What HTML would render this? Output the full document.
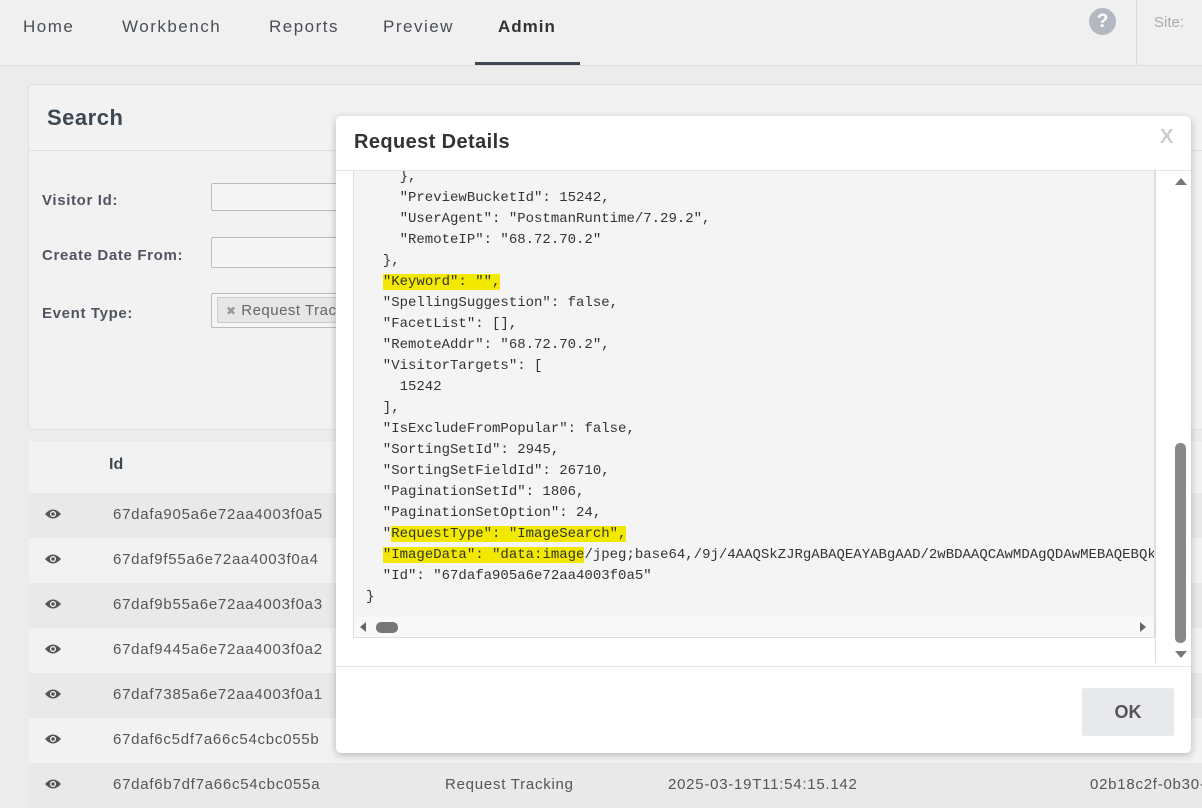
<!DOCTYPE html>
<html><head><meta charset="utf-8"><style>
*{box-sizing:border-box;margin:0;padding:0}
body{width:1202px;height:797px;overflow:hidden;background:#ececec;font-family:"Liberation Sans",sans-serif;color:#444;position:relative}
.nav{position:absolute;left:0;top:0;width:1202px;height:66px;background:#f0f0f0;border-bottom:1px solid #dcdcdc}
.nav span{position:absolute;top:17px;font-size:17px;color:#4a4f55;letter-spacing:1.5px}
.ul{position:absolute;left:475px;top:62px;width:105px;height:3px;background:#3d4852}
.help{position:absolute;left:1089px;top:8px;width:27px;height:27px;border-radius:50%;background:#b4b9c1;color:#fff;font-weight:bold;font-size:19px;text-align:center;line-height:27px}
.vl{position:absolute;left:1136px;top:0;width:1px;height:66px;background:#dcdcdc}
.site{position:absolute;left:1154px;top:14px;font-size:15px;color:#aaa}
.panel{position:absolute;left:28px;top:84px;width:1190px;height:346px;background:#f2f2f2;border:1px solid #e0e0e0;border-radius:4px}
.panel h2{position:absolute;left:18px;top:20px;font-size:22px;font-weight:bold;color:#3d4852;letter-spacing:0.5px}
.panel .hl{position:absolute;left:0;top:65px;width:100%;height:1px;background:#e0e0e0}
.lbl{position:absolute;left:42px;font-size:15px;font-weight:bold;color:#505560;letter-spacing:0.65px}
.inp{position:absolute;left:211px;width:200px;height:28px;border:1px solid #bbb;background:#f5f5f5;border-radius:2px}
.tbl{position:absolute;left:29px;top:441px;width:1180px}
.row{position:absolute;left:0;width:1180px;height:45px}
.row .eye{position:absolute;left:16px;top:15px}
.row .id{position:absolute;left:84px;top:13px;font-size:15px;color:#555;letter-spacing:0.75px}
.modal{position:absolute;left:336px;top:116px;width:855px;height:637px;background:#fff;border-radius:5px;box-shadow:0 2px 8px rgba(0,0,0,.25)}
.modal h3{position:absolute;left:18px;top:15px;font-size:20px;font-weight:bold;color:#333;letter-spacing:0.4px}
.x{position:absolute;left:824px;top:10px;font-size:20px;color:#ccc;font-weight:bold}
.mh{position:absolute;left:0;top:54px;width:855px;height:1px;background:#e5e5e5}
.code{position:absolute;left:17px;top:55px;width:802px;height:467px;background:#f4f4f4;border:1px solid #ddd;border-top:none;overflow:hidden}
pre{position:absolute;left:12px;top:-4px;font-family:"Liberation Mono",monospace;font-size:14px;line-height:21px;color:#333;white-space:pre}
.hy{background:#f3e900}
.hs{position:absolute;left:0;bottom:0;width:100%;height:20px;background:#f8f8f8}
.vs{position:absolute;left:819px;top:55px;width:35px;height:492px;background:#fff;border-left:1px solid #ddd}
.ft{position:absolute;left:0;top:550px;width:855px;height:1px;background:#e5e5e5}
.ok{position:absolute;left:746px;top:572px;width:92px;height:48px;background:#e7e9ec;border-radius:3px;font-size:18px;font-weight:bold;color:#555;text-align:center;line-height:48px}
</style></head><body>
<div class="nav">
<span style="left:23px">Home</span><span style="left:122px">Workbench</span><span style="left:269px">Reports</span><span style="left:383px">Preview</span><span style="left:498px;font-weight:bold;color:#333;letter-spacing:1px">Admin</span>
<div class="ul"></div><div class="help">?</div><div class="vl"></div><div class="site">Site:</div>
</div>
<div class="panel"><h2>Search</h2><div class="hl"></div></div>
<div class="lbl" style="top:192px">Visitor Id:</div><div class="inp" style="top:183px"></div>
<div class="lbl" style="top:247px">Create Date From:</div><div class="inp" style="top:237px;height:31px"></div>
<div class="lbl" style="top:305px">Event Type:</div><div class="inp" style="top:293px;height:35px"><div style="position:absolute;left:5px;top:3px;width:190px;height:26px;background:#e6e6e6;border:1px solid #ccc;border-radius:2px;font-size:15px;color:#666;padding:4px 8px;white-space:nowrap;overflow:hidden;letter-spacing:0.5px"><span style="color:#999;font-size:12px">✖</span> Request Tracking</div></div>
<div class="tbl">
<div class="row" style="top:0;height:52px;background:#f2f2f2"><span style="position:absolute;left:80px;top:15px;font-size:16px;font-weight:bold;color:#3d4852">Id</span></div>
<div class="row" style="top:52px;background:#e9e9e9"><svg class="eye" width="16" height="12" viewBox="0 0 16 12"><path d="M0 6Q8-3 16 6Q8 15 0 6Z" fill="#555"/><circle cx="8" cy="6" r="3" fill="#fff"/><circle cx="8" cy="6" r="1.8" fill="#555"/></svg><span class="id">67dafa905a6e72aa4003f0a5</span></div>
<div class="row" style="top:97px;background:#f2f2f2"><svg class="eye" width="16" height="12" viewBox="0 0 16 12"><path d="M0 6Q8-3 16 6Q8 15 0 6Z" fill="#555"/><circle cx="8" cy="6" r="3" fill="#fff"/><circle cx="8" cy="6" r="1.8" fill="#555"/></svg><span class="id">67daf9f55a6e72aa4003f0a4</span></div>
<div class="row" style="top:142px;background:#e9e9e9"><svg class="eye" width="16" height="12" viewBox="0 0 16 12"><path d="M0 6Q8-3 16 6Q8 15 0 6Z" fill="#555"/><circle cx="8" cy="6" r="3" fill="#fff"/><circle cx="8" cy="6" r="1.8" fill="#555"/></svg><span class="id">67daf9b55a6e72aa4003f0a3</span></div>
<div class="row" style="top:187px;background:#f2f2f2"><svg class="eye" width="16" height="12" viewBox="0 0 16 12"><path d="M0 6Q8-3 16 6Q8 15 0 6Z" fill="#555"/><circle cx="8" cy="6" r="3" fill="#fff"/><circle cx="8" cy="6" r="1.8" fill="#555"/></svg><span class="id">67daf9445a6e72aa4003f0a2</span></div>
<div class="row" style="top:232px;background:#e9e9e9"><svg class="eye" width="16" height="12" viewBox="0 0 16 12"><path d="M0 6Q8-3 16 6Q8 15 0 6Z" fill="#555"/><circle cx="8" cy="6" r="3" fill="#fff"/><circle cx="8" cy="6" r="1.8" fill="#555"/></svg><span class="id">67daf7385a6e72aa4003f0a1</span></div>
<div class="row" style="top:277px;background:#f2f2f2"><svg class="eye" width="16" height="12" viewBox="0 0 16 12"><path d="M0 6Q8-3 16 6Q8 15 0 6Z" fill="#555"/><circle cx="8" cy="6" r="3" fill="#fff"/><circle cx="8" cy="6" r="1.8" fill="#555"/></svg><span class="id">67daf6c5df7a66c54cbc055b</span></div>
<div class="row" style="top:322px;background:#e9e9e9"><svg class="eye" width="16" height="12" viewBox="0 0 16 12"><path d="M0 6Q8-3 16 6Q8 15 0 6Z" fill="#555"/><circle cx="8" cy="6" r="3" fill="#fff"/><circle cx="8" cy="6" r="1.8" fill="#555"/></svg><span class="id">67daf6b7df7a66c54cbc055a</span><span class="id" style="left:416px">Request Tracking</span><span class="id" style="left:639px">2025-03-19T11:54:15.142</span><span class="id" style="left:1061px">02b18c2f-0b30-</span></div>
</div>
<div class="modal">
<h3>Request Details</h3><div class="x">X</div><div class="mh"></div>
<div class="code"><pre>    },
    "PreviewBucketId": 15242,
    "UserAgent": "PostmanRuntime/7.29.2",
    "RemoteIP": "68.72.70.2"
  },
  <span class="hy">"Keyword": "",</span>
  "SpellingSuggestion": false,
  "FacetList": [],
  "RemoteAddr": "68.72.70.2",
  "VisitorTargets": [
    15242
  ],
  "IsExcludeFromPopular": false,
  "SortingSetId": 2945,
  "SortingSetFieldId": 26710,
  "PaginationSetId": 1806,
  "PaginationSetOption": 24,
  "<span class="hy">RequestType": "ImageSearch",</span>
  <span class="hy">"ImageData": "data:image</span>/jpeg;base64,/9j/4AAQSkZJRgABAQEAYABgAAD/2wBDAAQCAwMDAgQDAwMEBAQEBQkGBQU
  "Id": "67dafa905a6e72aa4003f0a5"
}</pre>
<div class="hs"><svg width="800" height="20"><path d="M6 10L12 5V15Z" fill="#666"/><rect x="22" y="5" width="22" height="11" rx="5" fill="#777"/><path d="M792 10L786 5V15Z" fill="#666"/></svg></div>
</div>
<div class="vs"><svg width="35" height="492"><path d="M19 14L25 7L31 14Z" fill="#777"/><rect x="19" y="272" width="11" height="200" rx="5" fill="#888"/><path d="M19 480L25 487L31 480Z" fill="#777"/></svg></div>
<div class="ft"></div>
<div class="ok">OK</div>
</div>
</body></html>
